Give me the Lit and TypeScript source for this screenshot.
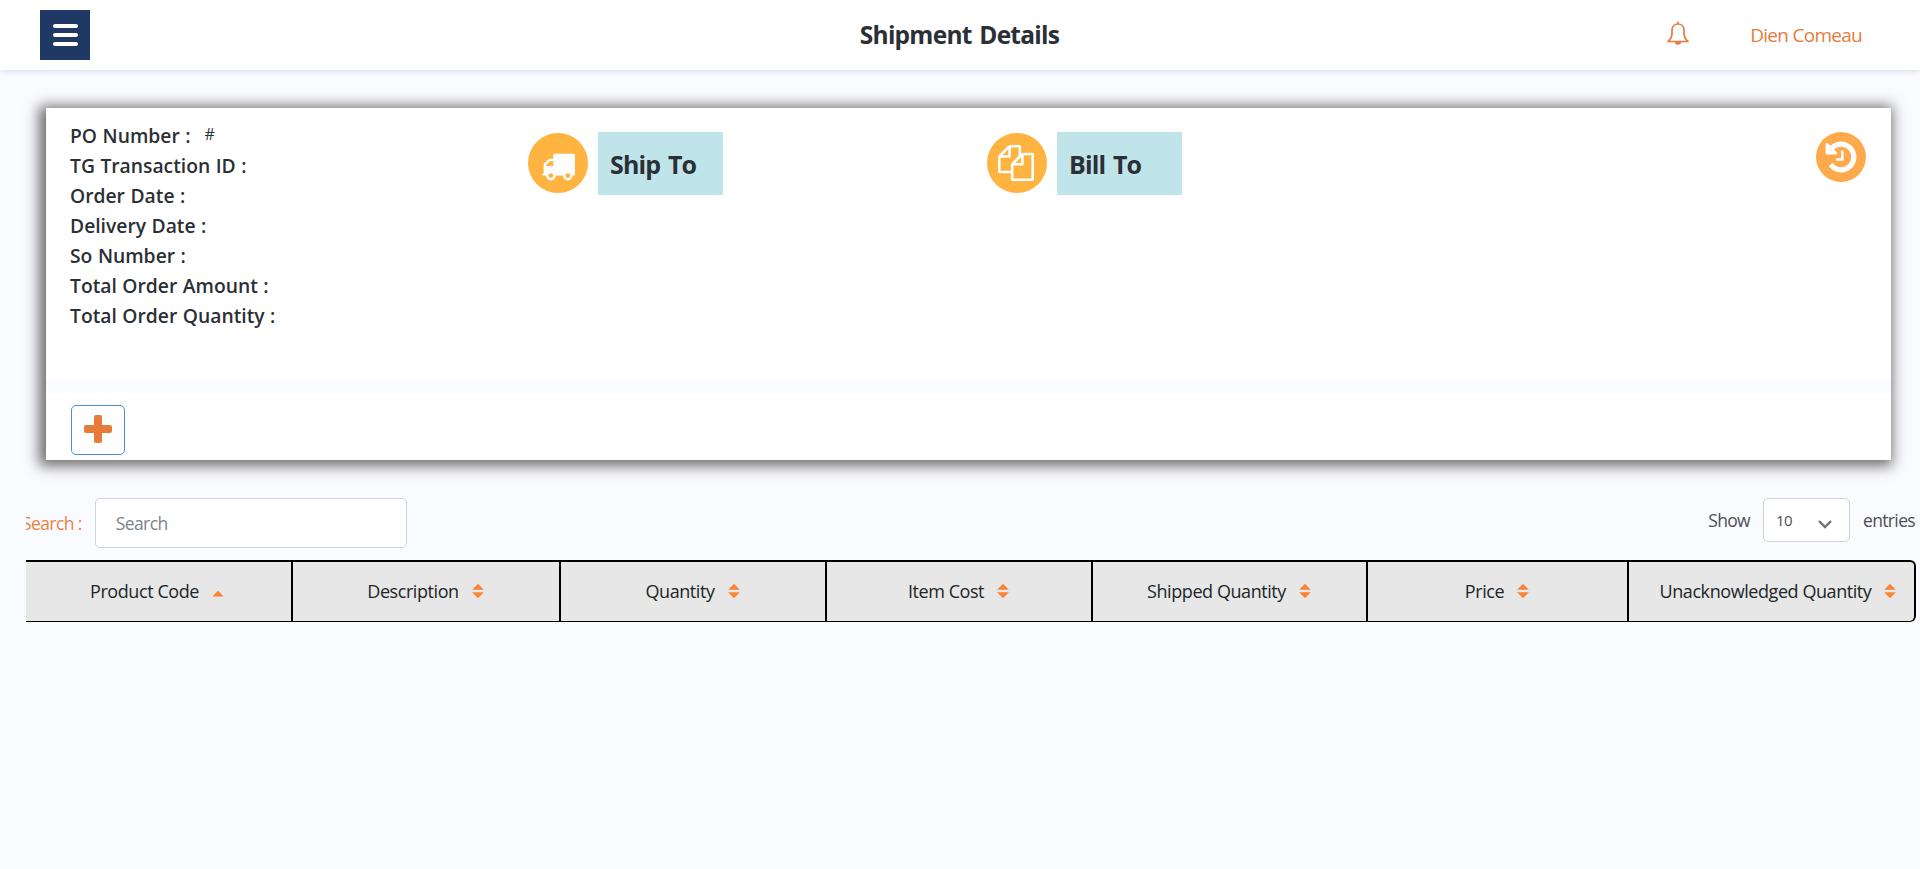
import { LitElement, html, css, svg } from "lit";
import { customElement } from "lit/decorators.js";
import { classMap } from "lit/directives/class-map.js";

const FIELDS: { label: string; value?: string }[] = [
  { label: "PO Number :", value: "#" },
  { label: "TG Transaction ID :" },
  { label: "Order Date :" },
  { label: "Delivery Date :" },
  { label: "So Number :" },
  { label: "Total Order Amount :" },
  { label: "Total Order Quantity :" },
];

const COLUMNS = [
  "Product Code",
  "Description",
  "Quantity",
  "Item Cost",
  "Shipped Quantity",
  "Price",
  "Unacknowledged Quantity",
];

const truckPath = "M704 1536q0-52-38-90t-90-38-90 38-38 90 38 90 90 38 90-38 38-90zM320 1024h384v-256h-158q-13 0-22 9l-195 195q-9 9-9 22v30zM1600 1536q0-52-38-90t-90-38-90 38-38 90 38 90 90 38 90-38 38-90zM1856 448v1024q0 15-4 26.500t-13.500 18.500-16.500 11.500-23.500 6-22.500 2-25.500 0-22.500-.5q0 106-75 181t-181 75-181-75-75-181h-384q0 106-75 181t-181 75-181-75-75-181h-64q-3 0-22.500.5t-25.500 0-22.500-2-23.500-6-16.500-11.500-13.500-18.500-4-26.500q0-26 19-45t45-19v-320q0-8-.5-35t0-38 2.500-34.500 6.500-37 14-30.500 22.500-30l198-198q19-19 50.500-32t58.500-13h160v-192q0-26 19-45t45-19h1024q26 0 45 19t19 45z";
const filesPath = "M1696 384q40 0 68 28t28 68v1216q0 40-28 68t-68 28h-960q-40 0-68-28t-28-68v-288h-544q-40 0-68-28t-28-68v-672q0-40 20-88t48-76l408-408q28-28 76-48t88-20h416q40 0 68 28t28 68v328q68-40 128-40h416zm-544 213l-299 299h299v-299zm-640-384l-299 299h299v-299zm196 647l316-316v-416h-384v416q0 40-28 68t-68 28h-416v640h512v-256q0-40 20-88t48-76zm956 804v-1152h-384v416q0 40-28 68t-68 28h-416v640h896z";
const historyPath = "M1664 896q0 156-61 298t-164 245-245 164-298 61q-172 0-327-72.500t-264-204.500q-7-10-6.500-22.500t8.500-20.500l137-138q10-9 25-9 16 2 23 12 73 95 179 147t225 52q104 0 198.500-40.500t163.500-109.500 109.500-163.500 40.500-198.500-40.500-198.500-109.500-163.500-163.500-109.500-198.500-40.500q-98 0-188 35.500t-160 101.500l137 138q31 30 14 69-17 40-59 40h-448q-26 0-45-19t-19-45v-448q0-42 40-59 39-17 69 14l130 129q107-101 244.500-156.500t284.500-55.500q156 0 298 61t245 164 164 245 61 298zm-640-288v448q0 14-9 23t-23 9h-320q-14 0-23-9t-9-23v-64q0-14 9-23t23-9h224v-352q0-14 9-23t23-9h64q14 0 23 9t9 23z";

@customElement("app-root")
export class AppRoot extends LitElement {
  static styles = css`
    :host { display: block; height: 869px; overflow: hidden; background: #fafbff; color: #2b2f36; font-family: "Open Sans", "Noto Sans", sans-serif; }
    * { box-sizing: border-box; }
    svg { display: block; flex: none; }
    .topbar { height: 70px; background: #fff; box-shadow: 0 1px 6px rgba(40, 45, 70, 0.16); display: grid; grid-template-columns: 1fr auto 1fr; align-items: center; padding: 0 58px 0 40px; }
    .menu { width: 50px; height: 50px; background: #203864; border: 0; padding: 0; display: flex; flex-direction: column; align-items: center; justify-content: center; gap: 5px; }
    .bar { width: 25px; height: 4px; border-radius: 2px; background: #fff; }
    .title { margin: 0 0 0 17px; font-size: 24.500px; line-height: 34px; font-weight: 700; letter-spacing: -0.75px; word-spacing: 2px; white-space: nowrap; }
    .account { display: flex; justify-content: flex-end; align-items: center; gap: 59px; color: #e77b3c; font-size: 19px; }
    .bell { margin: 0 1px 4px 0; }
    .user { letter-spacing: -0.72px; font-weight: 400; }
    .card { margin: 38px 29px 0 46px; height: 352px; background: #fff; box-shadow: -3px 2px 13px 4px #6f6d6c; display: flex; flex-direction: column; }
    .summary { height: 272px; padding: 12px 25px 0 24px; display: grid; grid-template-columns: 458px 459px 1fr auto; align-items: start; }
    .fields { margin: 0; display: flex; flex-direction: column; }
    .row { display: flex; height: 30px; align-items: center; gap: 14px; white-space: nowrap; }
    .label { font-size: 19.300px; font-weight: 600; word-spacing: 0.5px; }
    .value { font-size: 16px; padding-bottom: 3px; }
    .party { display: flex; gap: 10px; padding-top: 12px; align-items: flex-start; }
    .disc { width: 60px; height: 60px; margin-top: 1px; border-radius: 50%; background: #ffb340; display: flex; align-items: center; justify-content: center; color: #fff; }
    .disc svg { margin-right: 2px; }
    .tag { width: 125px; height: 63px; padding: 1px 0 0 12px; background: #bfe4e9; display: flex; align-items: center; font-size: 25px; font-weight: 700; letter-spacing: -0.85px; word-spacing: 2px; }
    .history { width: 50px; height: 50px; margin-top: 12px; border-radius: 50%; background: #ffa94d; display: flex; align-items: center; justify-content: center; }
    .strip { height: 12.500px; flex: none; background: #fafbff; }
    .actions { padding: 12.500px 25px 0; }
    .add { width: 54px; height: 50px; border: 1px solid #4a8be5; border-radius: 5px; background: #fff; padding: 0 1px 2px 0; display: flex; align-items: center; justify-content: center; }
    .listing { margin: 38px 4px 0 26px; overflow: hidden; }
    .inner { margin-left: -4px; }
    .tools { height: 62px; display: flex; justify-content: space-between; align-items: flex-start; }
    .search { display: flex; align-items: center; gap: 13px; color: #ef7f3c; font-size: 17.500px; font-weight: 500; letter-spacing: -0.6px; }
    .input { width: 312px; height: 50px; border: 1px solid #ced4da; border-radius: 5px; padding: 0 20px; font: 400 17.500px "Open Sans", sans-serif; background: #fff; letter-spacing: -0.6px; }
    .input::placeholder { color: #7b828a; opacity: 1; }
    .length { display: flex; align-items: center; gap: 13px; margin-right: 1px; font-size: 17.500px; letter-spacing: -0.65px; color: #4b5056; }
    .select { width: 87px; height: 44px; border: 1px solid #ced4da; border-radius: 5px; background: #fff; display: flex; align-items: center; justify-content: space-between; padding: 0 17px 0 12px; font-size: 15px; }
    .chev { margin-top: 8px; }
    .head { height: 62px; border: 2px solid #000; border-left: 0; border-bottom-width: 1px; border-radius: 0 6px 6px 0; background: #e7e7e7; display: grid; grid-template-columns: 271px 268px 266px 266px 275px 261px 1fr; color: #212529; overflow: hidden; }
    .cell { display: flex; align-items: center; justify-content: center; gap: 13px; padding-right: 1px; border-right: 2px solid #000; font-size: 18px; font-weight: 500; letter-spacing: -0.43px; white-space: nowrap; }
    .cell.sorted { padding: 0 0 0 1px; }
    .cell:last-child { border-right: 0; padding-left: 14px; }
    .cell span { padding-bottom: 2px; }
    .cell svg { margin-bottom: 1px; }
  `;

  private sortIcon(active: boolean) {
    return html`<svg width="12" height="16" viewBox="0 0 12 16" fill="#fb8334">
      ${active ? svg`<path d="M0.500 13.500 6 7.500l5.500 6z" />` : svg`<path d="M0.200 6.800 6 .8l5.800 6zM.2 9.200h11.600L6 15.200z" />`}
    </svg>`;
  }

  render() {
    return html`
      <header class="topbar">
        <button class="menu" aria-label="Menu"><span class="bar"></span><span class="bar"></span><span class="bar"></span></button>
        <h1 class="title">Shipment Details</h1>
        <div class="account">
          <svg class="bell" width="24" height="24" viewBox="0 0 24 24" fill="none" stroke="#e77b3c" stroke-width="1.700" stroke-linejoin="round">
            <path d="M2 20.500h20c-2.500-2-4-4-4-8.500V9.500C18 5.500 15.500 3 12 3S6 5.500 6 9.500V12c0 4.500-1.500 6.500-4 8.500zM12 3V.8" />
            <path d="M8.800 20.500a3.200 3.200 0 0 0 6.400 0z" fill="#e77b3c" stroke="none" />
          </svg>
          <span class="user">Dien Comeau</span>
        </div>
      </header>
      <section class="card">
        <div class="summary">
          <div class="fields">
            ${FIELDS.map((f) => html`<div class="row"><span class="label">${f.label}</span>${f.value ? html`<span class="value">${f.value}</span>` : ""}</div>`)}
          </div>
          <div class="party">
            <span class="disc"><svg width="35" height="35" viewBox="0 0 1856 1792" fill="#fff"><path d=${truckPath} /></svg></span>
            <span class="tag">Ship To</span>
          </div>
          <div class="party">
            <span class="disc"><svg width="36" height="36" viewBox="0 0 1792 1792" fill="#fff"><path d=${filesPath} /></svg></span>
            <span class="tag">Bill To</span>
          </div>
          <span class="history"><svg width="36" height="36" viewBox="0 0 1792 1792" fill="#fff"><path d=${historyPath} /></svg></span>
        </div>
        <div class="strip"></div>
        <div class="actions">
          <button class="add" aria-label="Add"><svg width="28" height="28" viewBox="0 0 28 28" fill="#e77b3c"><path d="M12 0h4a2 2 0 0 1 2 2v8h8a2 2 0 0 1 2 2v4a2 2 0 0 1-2 2h-8v8a2 2 0 0 1-2 2h-4a2 2 0 0 1-2-2v-8H2a2 2 0 0 1-2-2v-4a2 2 0 0 1 2-2h8V2a2 2 0 0 1 2-2z" /></svg></button>
        </div>
      </section>
      <section class="listing">
        <div class="inner">
          <div class="tools">
            <label class="search">Search :<input class="input" type="text" placeholder="Search" /></label>
            <div class="length">
              <span>Show</span>
              <span class="select">10
                <svg class="chev" width="14" height="9" viewBox="0 0 14 9" fill="none" stroke="#6c757d" stroke-width="2.400"><path d="M1 1l6 6 6-6" /></svg>
              </span>
              <span>entries</span>
            </div>
          </div>
          <div class="head">
            ${COLUMNS.map((c, i) => html`<div class=${classMap({ cell: true, sorted: i === 0 })}><span>${c}</span>${this.sortIcon(i === 0)}</div>`)}
          </div>
        </div>
      </section>
    `;
  }
}
